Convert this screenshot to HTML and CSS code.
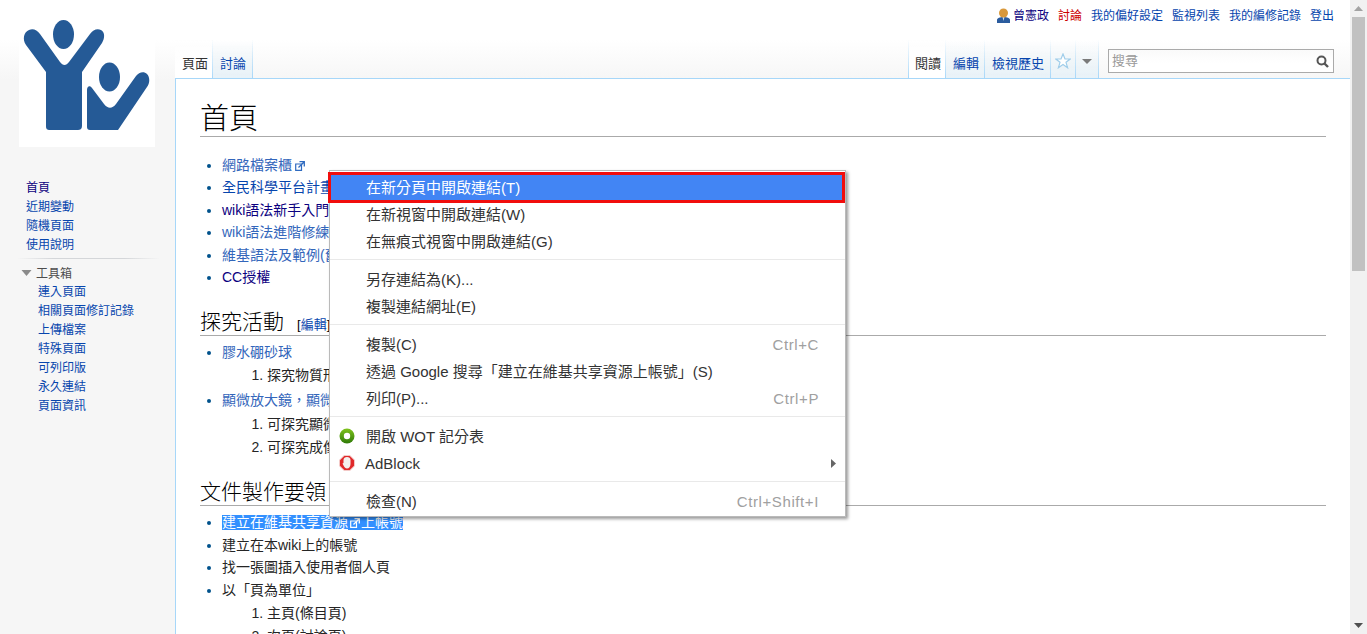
FILE: index.html
```html
<!DOCTYPE html>
<html lang="zh-Hant">
<head>
<meta charset="utf-8">
<title>首頁</title>
<link rel="stylesheet" href="styles.css">
</head>
<body>
<div class="app">
  <div class="page">
    <aside class="side">
      <a class="logo" href="#">
        <svg width="136" height="147" viewBox="19 0 136 147">
          <rect x="19" y="0" width="136" height="147" fill="#fff"/>
          <ellipse cx="63.500" cy="34.500" rx="10.500" ry="14.500" fill="#255a96"/>
          <ellipse cx="109.500" cy="77" rx="10.500" ry="14.500" fill="#255a96"/>
          <path fill="#255a96" d="M46 126V72L26 45C22 39 24 32 29 30C33 28 37 30 40 34L60 62C63 66 66 66 69 62L90 34C93 30 97 28 101 30C105 32 105 38 102 43L82 72V126C82 129 80 130 78 130H50C47 130 46 129 46 126Z"/>
          <path fill="#255a96" d="M87 127V90C87 86 90 85 92 88L104 104C108 109 112 109 116 104L136 76C139 72 144 71 147 74C150 77 150 83 147 87L118 130H90C88 130 87 129 87 127Z"/>
        </svg>
      </a>
      <nav class="nav">
        <ul class="nav-list">
          <li><a class="visited" href="#">首頁</a></li>
          <li><a href="#">近期變動</a></li>
          <li><a href="#">隨機頁面</a></li>
          <li><a href="#">使用說明</a></li>
        </ul>
        <div class="nav-sep"></div>
        <div class="tool-head">
          <svg class="tool-caret" width="11" height="6" viewBox="0 0 11 6"><path d="M.5 0H10.500L5.500 6Z" fill="#8a8a8a"/></svg>
          <span>工具箱</span>
        </div>
        <ul class="nav-list tools">
          <li><a href="#">連入頁面</a></li>
          <li><a href="#">相關頁面修訂記錄</a></li>
          <li><a href="#">上傳檔案</a></li>
          <li><a href="#">特殊頁面</a></li>
          <li><a href="#">可列印版</a></li>
          <li><a href="#">永久連結</a></li>
          <li><a href="#">頁面資訊</a></li>
        </ul>
      </nav>
    </aside>
    <div class="main">
      <div class="personal">
        <svg class="user-icon" width="13" height="15" viewBox="0 0 13 15">
          <path d="M0 15V12C0 10 3 9 6.500 9S13 10 13 12V15Z" fill="#2b5c9e"/>
          <path d="M5.500 9H7.500L6.500 13Z" fill="#cfe0f0"/>
          <circle cx="6.500" cy="5" r="4.500" fill="#d9983a"/>
        </svg>
        <a class="visited user" href="#">曾憲政</a>
        <a class="red" href="#">討論</a>
        <a href="#">我的偏好設定</a>
        <a href="#">監視列表</a>
        <a href="#">我的編修記錄</a>
        <a href="#">登出</a>
      </div>
      <div class="tabbar">
        <div class="tabs">
          <a class="tab active" href="#">頁面</a>
          <a class="tab" href="#">討論</a>
        </div>
        <div class="tabs right">
          <a class="tab active" href="#">閱讀</a>
          <a class="tab" href="#">編輯</a>
          <a class="tab" href="#">檢視歷史</a>
          <a class="tab icon-tab star" href="#">
            <svg width="16" height="16" viewBox="0 0 16 16"><path d="M8 1L10 6H15.200L11 9.300L12.600 14.800L8 11.600L3.400 14.800L5 9.300L.8 6H6Z" fill="#fff" stroke="#9fcdea" stroke-width="1.200"/></svg>
          </a>
          <a class="tab icon-tab more" href="#">
            <svg width="10" height="5" viewBox="0 0 10 5"><path d="M0 0H10L5 5Z" fill="#7a7a7a"/></svg>
          </a>
          <div class="search">
            <span>搜尋</span>
            <svg width="13" height="13" viewBox="0 0 13 13"><circle cx="5.500" cy="5.500" r="4" fill="none" stroke="#555" stroke-width="2"/><path d="M8.500 8.500L12 12" stroke="#555" stroke-width="2.400"/></svg>
          </div>
        </div>
      </div>
      <main class="content">
        <h1>首頁</h1>
        <ul class="list first">
          <li><a class="ext" href="#">網路檔案櫃</a><svg class="ext-icon" width="10" height="10" viewBox="0 0 10 10"><path d="M.7 3H6.500V9.300H.7Z" fill="none" stroke="#2f6bc0" stroke-width="1.200"/><path d="M4.500 .7H9.300V5.500M9.300 .7L3.500 6.500" fill="none" stroke="#2f6bc0" stroke-width="1.300"/></svg></li>
          <li><a href="#">全民科學平台計畫</a></li>
          <li><a class="visited" href="#">wiki語法新手入門</a></li>
          <li><a class="ext" href="#">wiki語法進階修練</a></li>
          <li><a class="ext" href="#">維基語法及範例(舊</a></li>
          <li><a class="visited" href="#">CC授權</a></li>
        </ul>
        <h2>探究活動<span class="edit"><span>[</span><a href="#">編輯</a><span>]</span></span></h2>
        <ul class="list">
          <li><a class="ext" href="#">膠水硼砂球</a>
            <ol class="tight"><li>探究物質形態</li></ol>
          </li>
          <li><a class="ext" href="#">顯微放大鏡，顯微</a>
            <ol><li>可探究顯微世界</li><li>可探究成像</li></ol>
          </li>
        </ul>
        <h2 class="third">文件製作要領</h2>
        <ul class="list">
          <li><span class="selected">建立在<u>維基共享資源</u><svg class="ext-icon sel" width="10" height="10" viewBox="0 0 10 10"><path d="M.7 3H6.500V9.300H.7Z" fill="none" stroke="#fff" stroke-width="1.200"/><path d="M4.500 .7H9.300V5.500M9.300 .7L3.500 6.500" fill="none" stroke="#fff" stroke-width="1.300"/></svg>上帳號</span></li>
          <li>建立在本wiki上的帳號</li>
          <li>找一張圖插入使用者個人頁</li>
          <li class="gap">以「頁為單位」
            <ol class="tight"><li>主頁(條目頁)</li><li>次頁(討論頁)</li></ol>
          </li>
        </ul>
      </main>
    </div>
    <div class="menu">
      <div class="item hot"><span class="label">在新分頁中開啟連結(T)</span></div>
      <div class="item"><span class="label">在新視窗中開啟連結(W)</span></div>
      <div class="item"><span class="label">在無痕式視窗中開啟連結(G)</span></div>
      <div class="sep"></div>
      <div class="item"><span class="label">另存連結為(K)...</span></div>
      <div class="item"><span class="label">複製連結網址(E)</span></div>
      <div class="sep"></div>
      <div class="item"><span class="label">複製(C)</span><span class="key">Ctrl+C</span></div>
      <div class="item"><span class="label">透過 Google 搜尋「建立在維基共享資源上帳號」(S)</span></div>
      <div class="item"><span class="label">列印(P)...</span><span class="key">Ctrl+P</span></div>
      <div class="sep"></div>
      <div class="item">
        <svg class="m-icon" width="16" height="16" viewBox="0 0 16 16">
          <defs><linearGradient id="wot" x1="0" y1="0" x2="0" y2="1"><stop offset="0" stop-color="#7fc31c"/><stop offset="1" stop-color="#2f7a08"/></linearGradient></defs>
          <circle cx="8" cy="8" r="7.500" fill="url(#wot)"/><circle cx="8" cy="8" r="3.200" fill="#fff"/>
        </svg>
        <span class="label">開啟 WOT 記分表</span>
      </div>
      <div class="item">
        <svg class="m-icon" width="16" height="16" viewBox="0 0 16 16">
          <path d="M5 0H11L16 5V11L11 16H5L0 11V5Z" fill="#f3c9c7"/>
          <path d="M5.300 1H10.700L15 5.300V10.700L10.700 15H5.300L1 10.700V5.300Z" fill="#e0282a"/>
          <path d="M4.500 5C4.500 3 6 2 8 2S11.500 3 11.500 5V9C11.500 11.500 10 13.500 8 13.500C6.500 13.500 5.500 12.500 4.500 10.500L3.500 8.500L4.500 8Z" fill="#f4f0ee"/>
        </svg>
        <span class="label adblock">AdBlock</span>
        <svg class="sub" width="5" height="9" viewBox="0 0 5 9"><path d="M0 0L5 4.500L0 9Z" fill="#666"/></svg>
      </div>
      <div class="sep"></div>
      <div class="item"><span class="label">檢查(N)</span><span class="key">Ctrl+Shift+I</span></div>
    </div>
  </div>
  <div class="scrollbar">
    <button class="sb-arrow" type="button"><svg width="9" height="5" viewBox="0 0 9 5"><path d="M0 5L4.500 0L9 5Z" fill="#a3a3a3"/></svg></button>
    <div class="sb-track"><div class="sb-thumb"></div></div>
    <button class="sb-arrow" type="button"><svg width="9" height="5" viewBox="0 0 9 5"><path d="M0 0H9L4.500 5Z" fill="#505050"/></svg></button>
  </div>
</div>
</body>
</html>
```
FILE: styles.css
```css
* { box-sizing: border-box; }
html, body { margin: 0; height: 100%; overflow: hidden; }
body {
  font-family: "Liberation Sans", "Noto Sans CJK TC", sans-serif;
  font-size: 12px;
  color: #252525;
}
a { color: #0645ad; text-decoration: none; }
a.visited { color: #0b0080; }
a.ext { color: #3366bb; }
a.red { color: #cc0000; }
ul, ol { margin: 0; padding: 0; }

.app { display: flex; height: 634px; }
.page {
  position: relative;
  display: flex;
  width: 1350px;
  height: 634px;
  overflow: hidden;
  background: linear-gradient(#fff 40px, #f6f6f6 80px);
}

/* Sidebar */
.side { width: 175px; flex: none; }
.logo { display: block; width: 136px; height: 147px; margin-left: 19px; }
.logo svg { display: block; }
.nav { padding-top: 31px; }
.nav-list { list-style: none; padding-left: 26px; margin-top: 0; }
.nav-list li { height: 19px; line-height: 21px; white-space: nowrap; }
.nav-sep {
  height: 1px;
  margin: 4px 15px 4px 17px;
  background: linear-gradient(90deg, rgba(200,204,209,0), #d4d6d9 25%, #d4d6d9 75%, rgba(200,204,209,0));
}
.tool-head {
  display: flex;
  align-items: center;
  height: 19px;
  margin-left: 21px;
  color: #4d4d4d;
}
.tool-caret { margin-right: 4px; }
.tools { padding-left: 38px; }

/* Main column */
.main { flex: 1; min-width: 0; display: flex; flex-direction: column; }
.personal {
  display: flex;
  justify-content: flex-end;
  align-items: center;
  gap: 9px;
  height: 40px;
  padding: 0 16px 9px 0;
  line-height: 18px;
  white-space: nowrap;
}
.user-icon { margin-right: -6px; }
.tabbar { display: flex; justify-content: space-between; height: 38px; }
.tabs { display: flex; }
.tabs.right { padding-right: 16px; }
.tab {
  display: flex;
  align-items: center;
  justify-content: center;
  padding: 10px 6px 0 7px;
  font-size: 13px;
  line-height: 18px;
  background: linear-gradient(rgba(255,255,255,0), #e8f2f8);
  border-right: 1px solid;
  border-image: linear-gradient(rgba(167,215,249,0), #a7d7f9) 1;
  white-space: nowrap;
}
.tab.active {
  padding-left: 7px;
  padding-right: 4px;
  color: #333;
  background: linear-gradient(rgba(255,255,255,0), #fff 60%);
}
.tabs.right .tab:first-child { border-left: 1px solid; padding-left: 6px; padding-right: 4px; }
.tabs.right .tab:nth-child(2) { padding-right: 5px; }
.icon-tab { padding-left: 0; padding-right: 0; }
.star { width: 25px; padding-top: 4px; }
.more { width: 23px; padding-top: 4px; }
.search {
  display: flex;
  justify-content: space-between;
  align-items: center;
  width: 226px;
  height: 24px;
  margin: 9px 0 0 9px;
  padding: 0 4px 0 3px;
  border: 1px solid #aaa;
  background: linear-gradient(#fafafa, #fff 60%);
  font-size: 13px;
  line-height: 18px;
  color: #999;
}

/* Content */
.content {
  flex: 1;
  padding: 0 24px;
  background: #fff;
  border-left: 1px solid #a7d7f9;
  border-top: 1px solid #a7d7f9;
  font-size: 14px;
  line-height: 22.4px;
  overflow: hidden;
}
h1 {
  margin: 18px 0 0;
  height: 40px;
  font-size: 29px;
  line-height: 44px;
  font-weight: 300;
  color: #000;
  border-bottom: 1px solid #aaa;
}
h2 {
  margin: 17px 0 0;
  height: 31px;
  font-size: 21px;
  line-height: 33px;
  font-weight: 300;
  color: #000;
  border-bottom: 1px solid #aaa;
  white-space: nowrap;
}
h2.third { margin-top: 16px; }
.edit { margin-left: 13px; font-size: 13px; font-weight: 400; }
.list { padding-left: 22px; margin-top: 5px; }
.list.first { margin-top: 17px; }
.list > li { list-style: disc; white-space: nowrap; }
.list > li::marker { color: #00528c; }
.list > li.gap { margin-top: 1px; }
.list ol { padding-left: 45px; margin: 2px 0 2px; }
.list ol.tight { margin-top: 0; }
.list ol li { list-style: decimal; height: 23px; line-height: 23px; }
.ext-icon { margin-left: 3px; vertical-align: -1px; }
.selected {
  display: inline-block;
  height: 15px;
  line-height: 15px;
  background: #3390ff;
  color: #fff;
}
.selected u { text-underline-offset: 2px; }
.ext-icon.sel { margin: 0 1px 0 2px; }

/* Context menu */
.menu {
  position: absolute;
  left: 329px;
  top: 170px;
  width: 517px;
  height: 347px;
  padding: 3px 0 2px;
  background: #fff;
  border: 1px solid #bababa;
  box-shadow: 2px 2px 3px rgba(0,0,0,.4);
  font-size: 15px;
  color: #333;
}
.item {
  position: relative;
  display: flex;
  align-items: center;
  justify-content: space-between;
  height: 27px;
  padding: 0 26px 0 36px;
  white-space: nowrap;
}
.label { line-height: 20px; }
.adblock { margin-left: -1px; }
.hot { margin-right: 2px; background: #4285f4; color: #fff; outline: 3px solid #f10d0c; outline-offset: -1px; }
.key { color: #a0a0a0; letter-spacing: .6px; }
.m-icon { position: absolute; left: 9px; top: 5px; }
.sub { position: absolute; left: 501px; top: 9px; }
.sep { height: 11px; padding-top: 4px; }
.sep::after { content: ""; display: block; height: 1px; background: #e9e9e9; }

/* Scrollbar */
.scrollbar {
  display: flex;
  flex-direction: column;
  width: 17px;
  flex: none;
  background: #f1f1f1;
}
.sb-arrow {
  display: flex;
  align-items: center;
  justify-content: center;
  width: 17px;
  height: 17px;
  padding: 0;
  border: 0;
  background: transparent;
}
.sb-track { flex: 1; }
.sb-thumb { width: 13px; height: 254px; margin-left: 2px; background: #c1c1c1; }
```
